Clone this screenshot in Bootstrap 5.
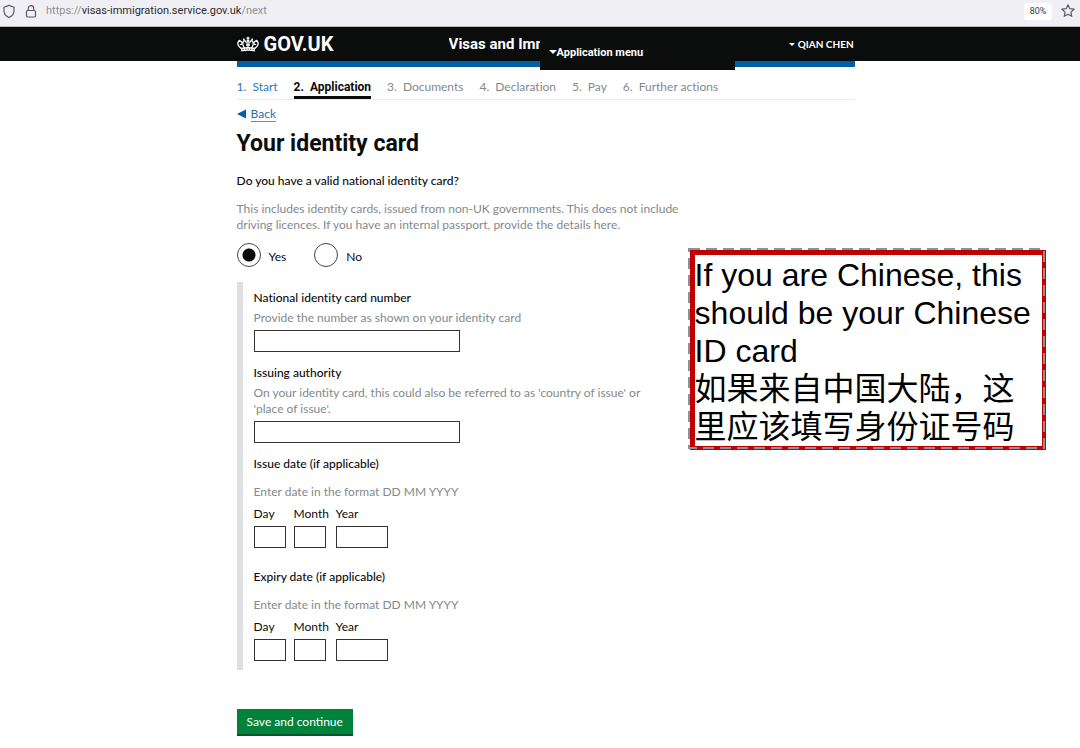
<!DOCTYPE html>
<html lang="en">
<head>
<meta charset="utf-8">
<meta name="viewport" content="width=device-width, initial-scale=1">
<title>Your identity card - Visas and Immigration - GOV.UK</title>
<link href="https://cdn.jsdelivr.net/npm/bootstrap@5.3.0/dist/css/bootstrap.min.css" rel="stylesheet">
<style>
  :root { --ink: #0b0c0c; --blue: #005ea5; --hint: #84898d; --rule: #dee0e2; --page-start: calc(22% - 1px); }
  body { font-family: Lato, "Liberation Sans", sans-serif; font-size: 12px; line-height: 16px; font-variant-ligatures: none; color: var(--ink); background: #fff; }
  .address-bar { height: 27px; background: #f0f0f4; border-bottom: 1px solid #b9b9bd; padding: 0 4px 4px 2px; color: #5b5b66; }
  .address-url { font-family: Roboto, sans-serif; font-size: 11px; color: #8f8f96; }
  .address-url b { font-weight: 400; color: #2b2a33; }
  .zoom-level { font-family: Roboto, sans-serif; font-size: 9px; width: 28px; height: 17px; line-height: 17px; background: #fff; border-radius: 3px; color: #3b3b44; }
  .column-wide { margin-left: var(--page-start); max-width: 618px; }
  .site-header { background: var(--ink); color: #fff; font-family: Roboto, sans-serif; font-weight: 700; }
  .header-row { height: 34px; }
  .brand-link { width: 212px; gap: 5px; font-size: 20px; line-height: 24px; color: #fff; }
  .brand-link:hover { color: #fff; }
  .service-title { font-size: 15px; width: 91px; }
  .menu-button, .user-button { border: 0; background: var(--ink); color: #fff; font-weight: 700; line-height: 16px; padding: 0; }
  .menu-button { left: 303px; top: 0; width: 195px; height: 43px; padding: 8px 9px 0; font-size: 11px; }
  .user-button { font-family: Lato, sans-serif; font-size: 10px; padding-right: 1px; }
  .caret { display: inline-block; border: 3px solid transparent; border-top: 3px solid #fff; border-bottom: 0; vertical-align: 2px; }
  .menu-button .caret { border-width: 4px 4px 0; }
  .blue-strip { height: 6px; background: var(--blue); }
  .steps { gap: 16px; border-bottom: 1px solid #ececee; color: var(--hint); padding-top: 12px; }
  .steps li { height: 20px; }
  .steps a { color: #2b7bb9; }
  .steps .current { font-family: Roboto, sans-serif; font-weight: 700; color: var(--ink); border-bottom: 3px solid var(--ink); }
  .step-no { margin-right: 6px; }
  .back-row { padding-top: 6px; }
  .back-link { color: #1f70b3; font-size: 12px; line-height: 15px; border-bottom: 1px solid #4d94cc; }
  .page-title { font-family: Roboto, sans-serif; font-weight: 700; font-size: 23px; line-height: 28px; margin: 8px 0 15px; }
  .strong-label { display: block; float: none; font-size: 12px; line-height: 16px; font-weight: 500; margin: 0; }
  .hint-text { color: var(--hint); margin: 0; max-width: 448px; }
  .choices { margin-top: 10px; }
  .choice { height: 24px; gap: 8px; }
  .choice input { width: 24px; height: 24px; margin: 0; border: 1px solid #444; background-color: #fff; }
  .choice input.form-check-input:checked { background-color: #fff; border-color: #444; background-image: radial-gradient(circle, var(--ink) 6px, transparent 7px); }
  .choice label { padding-top: 4px; }
  .inset-panel { border-left: 6px solid var(--rule); padding: 8px 0 9px 11px; margin-top: 15px; }
  .inset-panel .hint-text { max-width: 400px; }
  .box { display: block; height: 22px; border: 1px solid #333; border-radius: 0; padding: 0 4px; font-size: 12px; background: #fff; }
  .box-long { width: 206px; }
  .box-short { width: 32px; }
  .box-month { margin-right: 2px; }
  .box-year { width: 52px; }
  .field-gap { margin-top: 13px; }
  .group-gap { margin-top: 21px; }
  .date-row { gap: 8px; margin-top: 6px; }
  .date-row label { display: block; margin-bottom: 4px; white-space: nowrap; }
  .save-button { background: #00823b; color: #fff; border: 0; border-bottom: 2px solid #00562a; border-radius: 0; font-size: 12px; line-height: 16px; padding: 5px 10px 4px; margin: 39px 0 12px; }
  .save-button:hover { background: #006f32; color: #fff; }
  .callout-note { top: 250px; left: calc(22% + 452px); width: 356px; padding-top: 1px; border: 5px solid #c00000; border-width: 5px 4px 4px 5px; background: #fff; color: #000; font-family: "Liberation Sans", "Noto Sans CJK SC", sans-serif; font-size: 32px; line-height: 38px; }
  .callout-note p { margin: 0; white-space: nowrap; }
  .selection-frame { top: -6px; left: -6px; width: calc(100% + 8px); height: calc(100% + 8px); overflow: visible; }
</style>
</head>
<body class="position-relative">
<div class="address-bar d-flex align-items-center">
  <svg width="14" height="15" viewBox="0 0 14 15" fill="none" stroke="currentColor" stroke-width="1.2" aria-hidden="true"><path d="M7 1.300Q9 2.800 12 3v4c0 3-2 5.200-5 6.500C4 12.200 2 10 2 7V3Q5 2.800 7 1.300z" stroke-linejoin="round"/></svg>
  <svg class="ms-2" width="14" height="15" viewBox="0 0 14 15" fill="none" stroke="currentColor" stroke-width="1.200" aria-hidden="true"><rect x="2.500" y="6.500" width="9" height="6.500" rx="1.200"/><path d="M4.300 6.500V4.300a2.700 2.700 0 0 1 5.400 0v2.200"/></svg>
  <span class="address-url ms-2">https://<b>visas-immigration.service.gov.uk</b>/next</span>
  <span class="zoom-level ms-auto text-center">80%</span>
  <svg class="ms-2" width="16" height="16" viewBox="0 0 16 16" fill="none" stroke="currentColor" stroke-width="1.200" stroke-linejoin="round" aria-hidden="true"><path d="m8 1.800 1.800 3.900 4.300.5-3.200 2.900.9 4.200L8 11.200l-3.800 2.100.9-4.200L1.900 6.200l4.300-.5z"/></svg>
</div>

<header class="site-header">
  <div class="column-wide position-relative">
    <div class="header-row d-flex align-items-center">
      <a href="#" class="brand-link d-flex align-items-center text-decoration-none flex-shrink-0">
        <svg width="22" height="16" viewBox="0 0 22 16" aria-hidden="true">
          <g fill="none" stroke="#fff" stroke-width="1.300">
            <path d="M4.200 12.500C1.800 10.500.2 7.700 1.300 5.900c1-1.500 3.300-1 3.700.8.3 1.400-.8 2.300-1.900 1.600M17.800 12.500c2.400-2 4-4.800 2.900-6.600-1-1.500-3.300-1-3.700.8-.3 1.400.8 2.300 1.900 1.600"/>
            <path d="M7.300 12C6 9.500 5.200 6.500 6.500 5.200c1.400-1.200 3.200.3 2.700 2.300M14.700 12c1.300-2.500 2.100-5.500.8-6.800-1.400-1.200-3.200.3-2.700 2.300"/>
            <path d="M11 4v8M9 9h4M9.500 2.200h3M11 .8v2.400"/>
          </g>
          <g fill="#fff"><circle cx="11" cy="4.600" r="1.400"/><circle cx="6.800" cy="3.500" r="1"/><circle cx="15.200" cy="3.500" r="1"/><circle cx="2.500" cy="4.700" r="1"/><circle cx="19.500" cy="4.700" r="1"/>
          <path d="M3.800 11.800c4.500-1 9.900-1 14.400 0l-.5 3.600c-4.200-.8-9.200-.8-13.400 0z"/></g>
          <path d="M5.500 13.500c3.500-.6 7.500-.6 11 0" fill="none" stroke="#0b0c0c" stroke-width=".7" stroke-dasharray="1.500 1"/>
        </svg>
        <span>GOV.UK</span>
      </a>
      <span class="service-title text-nowrap overflow-hidden">Visas and Imm</span>
      <button type="button" class="user-button ms-auto"><span class="caret"></span> QIAN CHEN</button>
    </div>
    <button type="button" class="menu-button position-absolute text-start"><span class="caret"></span>Application menu</button>
  </div>
</header>

<main class="column-wide">
  <div class="blue-strip"></div>
  <nav aria-label="Progress">
    <ol class="steps list-unstyled d-flex mb-0">
      <li><a href="#" class="text-decoration-none"><span class="step-no">1.</span>Start</a></li>
      <li class="current" aria-current="step"><span class="step-no">2.</span>Application</li>
      <li><span class="step-no">3.</span>Documents</li>
      <li><span class="step-no">4.</span>Declaration</li>
      <li><span class="step-no">5.</span>Pay</li>
      <li><span class="step-no">6.</span>Further actions</li>
    </ol>
  </nav>
  <div class="back-row d-flex align-items-center">
    <svg class="me-1" width="10" height="10" viewBox="0 0 10 10" aria-hidden="true"><path d="M0 5 9 .5v9z" fill="#005ea5"/></svg>
    <a href="#" class="back-link text-decoration-none">Back</a>
  </div>
  <h1 class="page-title">Your identity card</h1>
  <form>
    <fieldset>
      <legend class="strong-label">Do you have a valid national identity card?</legend>
      <p class="hint-text mt-2 pt-1">This includes identity cards, issued from non-UK governments. This does not include<br>driving licences. If you have an internal passport, provide the details here.</p>
      <div class="choices d-flex">
        <div class="choice d-flex align-items-center me-4">
          <input class="form-check-input" type="radio" name="has-card" id="card-yes" checked>
          <label for="card-yes">Yes</label>
        </div>
        <div class="choice d-flex align-items-center ms-1">
          <input class="form-check-input" type="radio" name="has-card" id="card-no">
          <label for="card-no">No</label>
        </div>
      </div>
    </fieldset>

    <div class="inset-panel">
      <label class="strong-label" for="card-number">National identity card number</label>
      <p class="hint-text mt-1">Provide the number as shown on your identity card</p>
      <input class="box box-long mt-1" type="text" id="card-number">

      <label class="strong-label field-gap" for="authority">Issuing authority</label>
      <p class="hint-text mt-1">On your identity card, this could also be referred to as 'country of issue' or<br>'place of issue'.</p>
      <input class="box box-long mt-1" type="text" id="authority">

      <fieldset class="field-gap">
        <legend class="strong-label">Issue date (if applicable)</legend>
        <p class="hint-text mt-2 pt-1">Enter date in the format DD MM YYYY</p>
        <div class="date-row d-flex">
          <div class="box-short"><label for="issue-day">Day</label><input class="box w-100" type="text" id="issue-day"></div>
          <div class="box-short box-month"><label for="issue-month">Month</label><input class="box w-100" type="text" id="issue-month"></div>
          <div class="box-year"><label for="issue-year">Year</label><input class="box w-100" type="text" id="issue-year"></div>
        </div>
      </fieldset>

      <fieldset class="group-gap">
        <legend class="strong-label">Expiry date (if applicable)</legend>
        <p class="hint-text mt-2 pt-1">Enter date in the format DD MM YYYY</p>
        <div class="date-row d-flex">
          <div class="box-short"><label for="expiry-day">Day</label><input class="box w-100" type="text" id="expiry-day"></div>
          <div class="box-short box-month"><label for="expiry-month">Month</label><input class="box w-100" type="text" id="expiry-month"></div>
          <div class="box-year"><label for="expiry-year">Year</label><input class="box w-100" type="text" id="expiry-year"></div>
        </div>
      </fieldset>
    </div>

    <button type="submit" class="btn save-button">Save and continue</button>
  </form>
</main>

<aside class="callout-note position-absolute">
  <svg class="selection-frame position-absolute" aria-hidden="true"><rect width="100%" height="100%" fill="none" stroke="#8b909c" stroke-width="2" stroke-dasharray="11 6"/></svg>
  <p>If you are Chinese, this<br>should be your Chinese<br>ID card</p>
  <p lang="zh-CN">如果来自中国大陆，这<br>里应该填写身份证号码</p>
</aside>
<script src="https://cdn.jsdelivr.net/npm/bootstrap@5.3.0/dist/js/bootstrap.bundle.min.js"></script>
</body>
</html>
